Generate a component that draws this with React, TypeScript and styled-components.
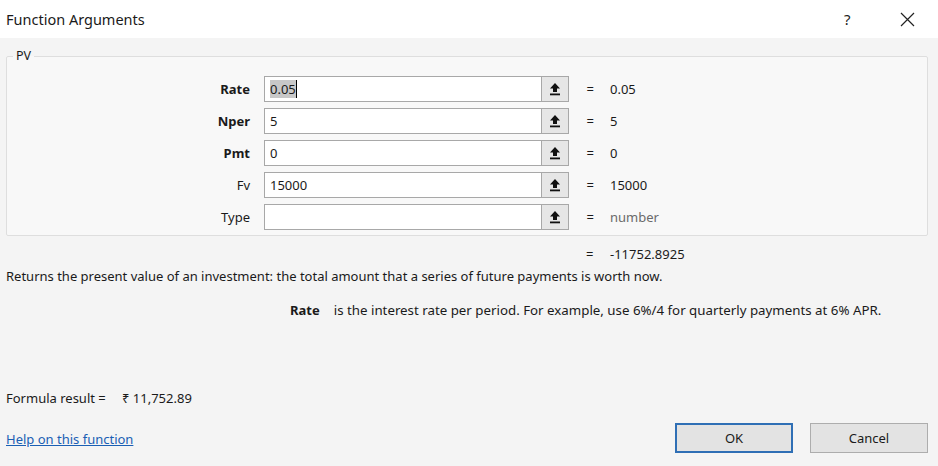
import * as React from 'react';
import styled, { createGlobalStyle } from 'styled-components';

const Global = createGlobalStyle`
  html, body {
    margin: 0;
    padding: 0;
    background: #f4f4f4;
  }
  body {
    font-family: "Noto Sans", "Open Sans", sans-serif;
    font-size: 13px;
    color: #1a1a1a;
  }
`;

const Dialog = styled.div`
  width: 938px;
  height: 466px;
  display: flex;
  flex-direction: column;
  background: #f4f4f4;
  overflow: hidden;
`;

const TitleBar = styled.div`
  height: 38px;
  display: flex;
  align-items: center;
  background: #ffffff;
  padding-left: 6px;
`;

const Title = styled.div`
  flex: 1;
  font-size: 14.5px;
  color: #1a1a1a;
`;

const HelpMark = styled.div`
  width: 20px;
  font-size: 15px;
  color: #222;
  margin-right: 36px;
`;

const CloseBox = styled.div`
  width: 16px;
  display: flex;
  align-items: center;
  margin-right: 22px;
`;

const Body = styled.div`
  flex: 1;
  display: flex;
  flex-direction: column;
  padding: 0 10px 0 6px;
`;

const Group = styled.fieldset`
  margin: 10px 0 0 0;
  padding: 9px 0 2px 0;
  border: 1px solid #dedede;
  border-radius: 2px;
  background: #f8f8f8;
  min-width: 0;
`;

const Legend = styled.legend`
  margin-left: 6px;
  padding: 0 3px;
  font-size: 12.5px;
  line-height: 16px;
`;

const ArgGrid = styled.div`
  display: grid;
  grid-template-columns: 257px 277px 28px 41px 1fr;
  grid-auto-rows: 32px;
`;

const Label = styled.div<{ $bold?: boolean }>`
  display: flex;
  align-items: center;
  justify-content: flex-end;
  padding-right: 14px;
  font-weight: ${({ $bold }) => ($bold ? 700 : 400)};
`;

const Cell = styled.div`
  display: flex;
  align-items: center;
`;

const Field = styled.div`
  height: 26px;
  width: 100%;
  box-sizing: border-box;
  border: 1px solid #a8a8a8;
  border-right: none;
  background: #ffffff;
  display: flex;
  align-items: center;
  padding-left: 5px;
`;

const Selected = styled.span`
  background: #c8c8c8;
  border-right: 1px solid #000;
`;

const RefButton = styled.div`
  height: 26px;
  width: 28px;
  box-sizing: border-box;
  border: 1px solid #a8a8a8;
  background: #e6e6e6;
  display: flex;
  align-items: center;
  justify-content: center;
`;

const Equals = styled.div`
  display: flex;
  align-items: center;
  justify-content: flex-end;
  padding-right: 16px;
`;

const Value = styled.div<{ $muted?: boolean }>`
  display: flex;
  align-items: center;
  color: ${({ $muted }) => ($muted ? '#6a6a6a' : '#1a1a1a')};
`;

const ResultRow = styled.div`
  display: flex;
  margin-top: 9px;
  padding-left: 580px;
  height: 18px;
  align-items: center;
`;

const ResultEq = styled.span`
  width: 24px;
`;

const Description = styled.div`
  margin-top: 4px;
  height: 18px;
  line-height: 18px;
`;

const ArgHelp = styled.div`
  margin-top: 16px;
  padding-left: 284px;
  display: flex;
  gap: 14px;
  line-height: 18px;
`;

const Bold = styled.span`
  font-weight: 700;
`;

const HelpText = styled.span`
  font-size: 13.3px;
`;

const FormulaRow = styled.div`
  margin-top: 70px;
  display: flex;
  line-height: 18px;
`;

const FormulaLabel = styled.span`
  width: 116px;
`;

const Footer = styled.div`
  margin-top: 16px;
  display: flex;
  align-items: center;
`;

const HelpLink = styled.a`
  flex: 1;
  color: #1a5fb4;
  text-decoration: underline;
  cursor: pointer;
  padding-top: 2px;
`;

const Button = styled.button<{ $primary?: boolean }>`
  width: 118px;
  height: 30px;
  margin-left: 17px;
  box-sizing: border-box;
  font-family: inherit;
  font-size: 13px;
  color: #1a1a1a;
  background: #e3e3e3;
  border: ${({ $primary }) => ($primary ? '2px solid #2f6fb5' : '1px solid #adadad')};
`;

const UpArrow = () => (
  <svg width="12" height="14" viewBox="0 0 12 14">
    <path d="M6 1 L11 6.5 H8 V10 H4 V6.5 H1 Z" fill="#111" />
    <rect x="1" y="11.5" width="10" height="1.8" fill="#111" />
  </svg>
);

const CloseIcon = () => (
  <svg width="15" height="15" viewBox="0 0 15 15">
    <path d="M1 1 L14 14 M14 1 L1 14" stroke="#222" strokeWidth="1.2" />
  </svg>
);

interface Arg {
  name: string;
  bold: boolean;
  input: string;
  value: string;
  muted?: boolean;
}

const args: Arg[] = [
  { name: 'Rate', bold: true, input: '0.05', value: '0.05' },
  { name: 'Nper', bold: true, input: '5', value: '5' },
  { name: 'Pmt', bold: true, input: '0', value: '0' },
  { name: 'Fv', bold: false, input: '15000', value: '15000' },
  { name: 'Type', bold: false, input: '', value: 'number', muted: true },
];

const App: React.FunctionComponent = () => (
  <Dialog>
    <Global />
    <TitleBar>
      <Title>Function Arguments</Title>
      <HelpMark>?</HelpMark>
      <CloseBox>
        <CloseIcon />
      </CloseBox>
    </TitleBar>
    <Body>
      <Group>
        <Legend>PV</Legend>
        <ArgGrid>
          {args.map((a, i) => (
            <React.Fragment key={a.name}>
              <Label $bold={a.bold}>{a.name}</Label>
              <Cell>
                <Field>{i === 0 ? <Selected>{a.input}</Selected> : a.input}</Field>
              </Cell>
              <Cell>
                <RefButton>
                  <UpArrow />
                </RefButton>
              </Cell>
              <Equals>=</Equals>
              <Value $muted={a.muted}>{a.value}</Value>
            </React.Fragment>
          ))}
        </ArgGrid>
      </Group>
      <ResultRow>
        <ResultEq>=</ResultEq>
        <span>-11752.8925</span>
      </ResultRow>
      <Description>
        Returns the present value of an investment: the total amount that a series of future payments is worth now.
      </Description>
      <ArgHelp>
        <Bold>Rate</Bold>
        <HelpText>is the interest rate per period. For example, use 6%/4 for quarterly payments at 6% APR.</HelpText>
      </ArgHelp>
      <FormulaRow>
        <FormulaLabel>Formula result =</FormulaLabel>
        <span>₹ 11,752.89</span>
      </FormulaRow>
      <Footer>
        <HelpLink>Help on this function</HelpLink>
        <Button $primary>OK</Button>
        <Button>Cancel</Button>
      </Footer>
    </Body>
  </Dialog>
);

export default App;
